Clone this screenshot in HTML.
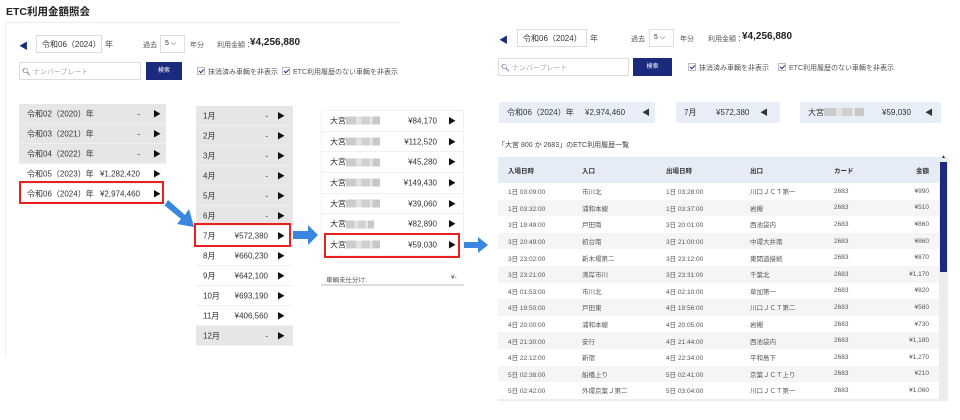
<!DOCTYPE html>
<html><head><meta charset="utf-8"><style>
*{box-sizing:border-box;margin:0;padding:0}
body{width:960px;height:420px;background:#fff;position:relative;overflow:hidden;font-family:"Liberation Sans","Noto Sans CJK JP",sans-serif;color:#333}
.a{position:absolute;white-space:nowrap}
.t7{font-size:7px}.t8{font-size:8px}
.inp{position:absolute;border:1px solid #ddd;background:#fff}
.btn{position:absolute;background:#1b2a7c;color:#fff;font-size:6px;text-align:center}
.cb{display:inline-block;width:8px;height:8px;border:1px solid #bbb;margin-right:3px;vertical-align:-1px;position:relative}
.cb:after{content:"";position:absolute;left:2px;top:0px;width:2px;height:4px;border:solid #1b2a7c;border-width:0 1.2px 1.2px 0;transform:rotate(45deg)}
.r{position:relative;font-size:8px;border-bottom:1px solid #f0f0f0}
.r span{position:absolute;top:50%;transform:translateY(-50%);white-space:nowrap}
.r .v{text-align:right}
.g{background:#e6e6e6}
.w{background:#fff}
.blur{display:inline-block;height:8px;width:34px;background:linear-gradient(90deg,#ccc 0 30%,#e2e2e2 30% 45%,#d0d0d0 45% 70%,#e6e6e6 70% 78%,#c8c8c8 78%);vertical-align:-1px}
.tri{font-size:8px;color:#111}
.red{position:absolute;border:2.5px solid #e8201f}
table{border-collapse:collapse}
td{vertical-align:middle}
</style></head><body>
<!-- LEFT PANEL -->
<div class="a" style="left:6px;top:4px;font-size:10.5px;font-weight:bold;color:#222">ETC利用金額照会</div>
<div class="a" style="left:5px;top:22px;width:395px;height:334px;border-left:1px solid #eee;border-top:1px solid #eee;background:#fff"></div>
<div class="a" style="left:19px;top:39px;color:#1b2a7c;font-size:9px">◀</div>
<div class="inp" style="left:36px;top:35px;width:66px;height:18px"></div>
<div class="a t8" style="left:42px;top:39px">令和06（2024）</div>
<div class="a t8" style="left:105px;top:39px;color:#555">年</div>
<div class="a t7" style="left:143px;top:40px;color:#555">過去</div>
<div class="inp" style="left:160px;top:35px;width:25px;height:18px"></div>
<div class="a t7" style="left:165px;top:40px">5 ⌵</div>
<div class="a t7" style="left:190px;top:40px;color:#555">年分</div>
<div class="a t7" style="left:217px;top:40px;color:#555">利用金額：</div>
<div class="a" style="left:250px;top:37px;font-size:10px;font-weight:bold;color:#222">¥4,256,880</div>
<div class="inp" style="left:19px;top:62px;width:122px;height:18px"></div>
<div class="a t7" style="left:22px;top:67px;color:#aaa"><span style="color:#1b2a7c">🔍︎</span> ナンバープレート</div>
<div class="btn" style="left:146px;top:62px;width:36px;height:18px;line-height:18px">検索</div>
<div class="a t7" style="left:197px;top:67px;color:#555"><span class="cb"></span>抹消済み車輌を非表示</div>
<div class="a t7" style="left:282px;top:67px;color:#555"><span class="cb"></span>ETC利用履歴のない車輌を非表示</div>

<!-- year list -->
<div class="a" style="left:19px;top:104px;width:147px">
<div class="r g" style="height:20px"><span style="left:8px">令和02（2020）年</span><span class="v" style="right:26px">-</span><span class="tri" style="left:134px">▶</span></div>
<div class="r g" style="height:20px"><span style="left:8px">令和03（2021）年</span><span class="v" style="right:26px">-</span><span class="tri" style="left:134px">▶</span></div>
<div class="r g" style="height:20px"><span style="left:8px">令和04（2022）年</span><span class="v" style="right:26px">-</span><span class="tri" style="left:134px">▶</span></div>
<div class="r w" style="height:20px"><span style="left:8px">令和05（2023）年</span><span class="v" style="right:26px">¥1,282,420</span><span class="tri" style="left:134px">▶</span></div>
<div class="r w" style="height:20px"><span style="left:8px">令和06（2024）年</span><span class="v" style="right:26px">¥2,974,460</span><span class="tri" style="left:134px">▶</span></div>
</div>
<div class="red" style="left:19px;top:181px;width:145px;height:23px"></div>

<!-- month list -->
<div class="a" style="left:196px;top:106px;width:97px">
<div class="r g" style="height:20px"><span style="left:7px">1月</span><span class="v" style="right:25px">-</span><span class="tri" style="left:81px">▶</span></div>
<div class="r g" style="height:20px"><span style="left:7px">2月</span><span class="v" style="right:25px">-</span><span class="tri" style="left:81px">▶</span></div>
<div class="r g" style="height:20px"><span style="left:7px">3月</span><span class="v" style="right:25px">-</span><span class="tri" style="left:81px">▶</span></div>
<div class="r g" style="height:20px"><span style="left:7px">4月</span><span class="v" style="right:25px">-</span><span class="tri" style="left:81px">▶</span></div>
<div class="r g" style="height:20px"><span style="left:7px">5月</span><span class="v" style="right:25px">-</span><span class="tri" style="left:81px">▶</span></div>
<div class="r g" style="height:20px"><span style="left:7px">6月</span><span class="v" style="right:25px">-</span><span class="tri" style="left:81px">▶</span></div>
<div class="r w" style="height:20px"><span style="left:7px">7月</span><span class="v" style="right:25px">¥572,380</span><span class="tri" style="left:81px">▶</span></div>
<div class="r w" style="height:20px"><span style="left:7px">8月</span><span class="v" style="right:25px">¥660,230</span><span class="tri" style="left:81px">▶</span></div>
<div class="r w" style="height:20px"><span style="left:7px">9月</span><span class="v" style="right:25px">¥642,100</span><span class="tri" style="left:81px">▶</span></div>
<div class="r w" style="height:20px"><span style="left:7px">10月</span><span class="v" style="right:25px">¥693,190</span><span class="tri" style="left:81px">▶</span></div>
<div class="r w" style="height:20px"><span style="left:7px">11月</span><span class="v" style="right:25px">¥406,560</span><span class="tri" style="left:81px">▶</span></div>
<div class="r g" style="height:20px"><span style="left:7px">12月</span><span class="v" style="right:25px">-</span><span class="tri" style="left:81px">▶</span></div>
</div>
<div class="red" style="left:194px;top:223px;width:97px;height:24px"></div>

<!-- vehicle list -->
<div class="a" style="left:321px;top:110px;width:143px;border:1px solid #f2f2f2;border-bottom:none">
<div class="r w" style="height:20.7px"><span style="left:8px">大宮<span class="blur"></span></span><span class="v" style="right:26px">¥84,170</span><span class="tri" style="left:126px">▶</span></div>
<div class="r w" style="height:20.7px"><span style="left:8px">大宮<span class="blur"></span></span><span class="v" style="right:26px">¥112,520</span><span class="tri" style="left:126px">▶</span></div>
<div class="r w" style="height:20.7px"><span style="left:8px">大宮<span class="blur"></span></span><span class="v" style="right:26px">¥45,280</span><span class="tri" style="left:126px">▶</span></div>
<div class="r w" style="height:20.7px"><span style="left:8px">大宮<span class="blur"></span></span><span class="v" style="right:26px">¥149,430</span><span class="tri" style="left:126px">▶</span></div>
<div class="r w" style="height:20.7px"><span style="left:8px">大宮<span class="blur"></span></span><span class="v" style="right:26px">¥39,060</span><span class="tri" style="left:126px">▶</span></div>
<div class="r w" style="height:20.7px"><span style="left:8px">大宮<span class="blur" style="width:28px"></span></span><span class="v" style="right:26px">¥82,890</span><span class="tri" style="left:126px">▶</span></div>
<div class="r w" style="height:20.7px"><span style="left:8px">大宮<span class="blur"></span></span><span class="v" style="right:26px">¥59,030</span><span class="tri" style="left:126px">▶</span></div>
</div>
<div class="red" style="left:324px;top:233px;width:136px;height:25px"></div>
<div class="a" style="left:326px;top:274px;font-size:6.5px;color:#555">車輌未仕分け:</div>
<div class="a" style="left:451px;top:274px;font-size:6.5px;color:#555">¥-</div>
<div class="a" style="left:321px;top:284px;width:143px;height:2px;background:#ddd"></div>

<!-- arrows -->
<svg class="a" style="left:160px;top:195px" width="340" height="60" viewBox="0 0 340 60">
<g fill="#3a86e0">
<path d="M5 10 L8 5 L25 20 L29 14 L34 32 L17 29 L21 24 L4 10 Z"/>
<path d="M133 36 L148 36 L148 30 L158 40 L148 50 L148 44 L133 44 Z"/>
<path d="M304 47 L318 47 L318 42 L328 50 L318 58 L318 53 L304 53 Z"/>
</g></svg>

<!-- RIGHT PANEL -->
<div class="a" style="left:499px;top:33px;color:#1b2a7c;font-size:9px">◀</div>
<div class="inp" style="left:517px;top:29px;width:70px;height:18px"></div>
<div class="a t8" style="left:523px;top:33px">令和06（2024）</div>
<div class="a t8" style="left:590px;top:33px;color:#555">年</div>
<div class="a t7" style="left:631px;top:34px;color:#555">過去</div>
<div class="inp" style="left:649px;top:29px;width:25px;height:18px"></div>
<div class="a t7" style="left:654px;top:34px">5 ⌵</div>
<div class="a t7" style="left:680px;top:34px;color:#555">年分</div>
<div class="a t7" style="left:708px;top:34px;color:#555">利用金額：</div>
<div class="a" style="left:742px;top:31px;font-size:10px;font-weight:bold;color:#222">¥4,256,880</div>
<div class="inp" style="left:498px;top:58px;width:131px;height:18px"></div>
<div class="a t7" style="left:501px;top:63px;color:#aaa"><span style="color:#1b2a7c">🔍︎</span> ナンバープレート</div>
<div class="btn" style="left:633px;top:58px;width:39px;height:18px;line-height:18px">検索</div>
<div class="a t7" style="left:688px;top:63px;color:#555"><span class="cb"></span>抹消済み車輌を非表示</div>
<div class="a t7" style="left:778px;top:63px;color:#555"><span class="cb"></span>ETC利用履歴のない車輌を非表示</div>

<div class="a" style="left:499px;top:102px;width:156px;height:21px;background:#e8eef7;font-size:8px;line-height:21px"><span class="a" style="left:8px">令和06（2024）年</span><span class="a" style="left:86px">¥2,974,460</span><span class="a" style="left:143px">◀</span></div>
<div class="a" style="left:676px;top:102px;width:104px;height:21px;background:#e8eef7;font-size:8px;line-height:21px"><span class="a" style="left:8px">7月</span><span class="a" style="left:40px">¥572,380</span><span class="a" style="left:84px">◀</span></div>
<div class="a" style="left:800px;top:102px;width:141px;height:21px;background:#e8eef7;font-size:8px;line-height:21px"><span class="a" style="left:8px">大宮<span class="blur" style="width:40px"></span></span><span class="a" style="left:82px">¥59,030</span><span class="a" style="left:125px">◀</span></div>

<div class="a t7" style="left:498px;top:140px;color:#444">「大宮 800 か 2683」のETC利用履歴一覧</div>

<div class="a" style="left:498px;top:157px;width:441px">
<table style="width:441px;font-size:6.5px;color:#555">
<tr style="background:#e6ecf6;height:26px;font-weight:bold;color:#333"><td style="padding-left:10px;width:84px">入場日時</td><td style="width:84px">入口</td><td style="width:84px">出場日時</td><td style="width:84px">出口</td><td style="width:50px">カード</td><td style="text-align:right;padding-right:10px">金額</td></tr>
<tr style="height:16.6px"><td style="padding-left:10px">1日 03:09:00</td><td>市川北</td><td>1日 03:28:00</td><td>川口ＪＣＴ第一</td><td>2683</td><td style="text-align:right;padding-right:10px">¥990</td></tr>
<tr style="height:16.6px;background:#f5f5f5"><td style="padding-left:10px">1日 03:32:00</td><td>浦和本線</td><td>1日 03:37:00</td><td>岩槻</td><td>2683</td><td style="text-align:right;padding-right:10px">¥510</td></tr>
<tr style="height:16.6px"><td style="padding-left:10px">3日 19:49:00</td><td>戸田南</td><td>3日 20:01:00</td><td>西池袋内</td><td>2683</td><td style="text-align:right;padding-right:10px">¥860</td></tr>
<tr style="height:16.6px;background:#f5f5f5"><td style="padding-left:10px">3日 20:49:00</td><td>初台南</td><td>3日 21:00:00</td><td>中環大井南</td><td>2683</td><td style="text-align:right;padding-right:10px">¥860</td></tr>
<tr style="height:16.6px"><td style="padding-left:10px">3日 23:02:00</td><td>新木場第二</td><td>3日 23:12:00</td><td>東関道接続</td><td>2683</td><td style="text-align:right;padding-right:10px">¥870</td></tr>
<tr style="height:16.6px;background:#f5f5f5"><td style="padding-left:10px">3日 23:21:00</td><td>湾岸市川</td><td>3日 23:31:00</td><td>千葉北</td><td>2683</td><td style="text-align:right;padding-right:10px">¥1,170</td></tr>
<tr style="height:16.6px"><td style="padding-left:10px">4日 01:53:00</td><td>市川北</td><td>4日 02:10:00</td><td>草加第一</td><td>2683</td><td style="text-align:right;padding-right:10px">¥820</td></tr>
<tr style="height:16.6px;background:#f5f5f5"><td style="padding-left:10px">4日 19:50:00</td><td>戸田東</td><td>4日 19:56:00</td><td>川口ＪＣＴ第二</td><td>2683</td><td style="text-align:right;padding-right:10px">¥580</td></tr>
<tr style="height:16.6px"><td style="padding-left:10px">4日 20:00:00</td><td>浦和本線</td><td>4日 20:05:00</td><td>岩槻</td><td>2683</td><td style="text-align:right;padding-right:10px">¥730</td></tr>
<tr style="height:16.6px;background:#f5f5f5"><td style="padding-left:10px">4日 21:30:00</td><td>安行</td><td>4日 21:44:00</td><td>西池袋内</td><td>2683</td><td style="text-align:right;padding-right:10px">¥1,180</td></tr>
<tr style="height:16.6px"><td style="padding-left:10px">4日 22:12:00</td><td>新宿</td><td>4日 22:34:00</td><td>平和島下</td><td>2683</td><td style="text-align:right;padding-right:10px">¥1,270</td></tr>
<tr style="height:16.6px;background:#f5f5f5"><td style="padding-left:10px">5日 02:38:00</td><td>船橋上り</td><td>5日 02:41:00</td><td>京葉ＪＣＴ上り</td><td>2683</td><td style="text-align:right;padding-right:10px">¥210</td></tr>
<tr style="height:16.6px"><td style="padding-left:10px">5日 02:42:00</td><td>外環京葉Ｊ第二</td><td>5日 03:04:00</td><td>川口ＪＣＴ第一</td><td>2683</td><td style="text-align:right;padding-right:10px">¥1,060</td></tr>
</table>
<div style="height:2px;background:#eee;width:441px"></div>
</div>
<div class="a" style="left:939px;top:157px;width:9px;height:244px;background:#ececec"></div>
<div class="a" style="left:940px;top:162px;width:7px;height:110px;background:#1b2a7c"></div>
<div class="a" style="left:941px;top:154px;font-size:5px;color:#1b2a7c">▲</div>
</body></html>
